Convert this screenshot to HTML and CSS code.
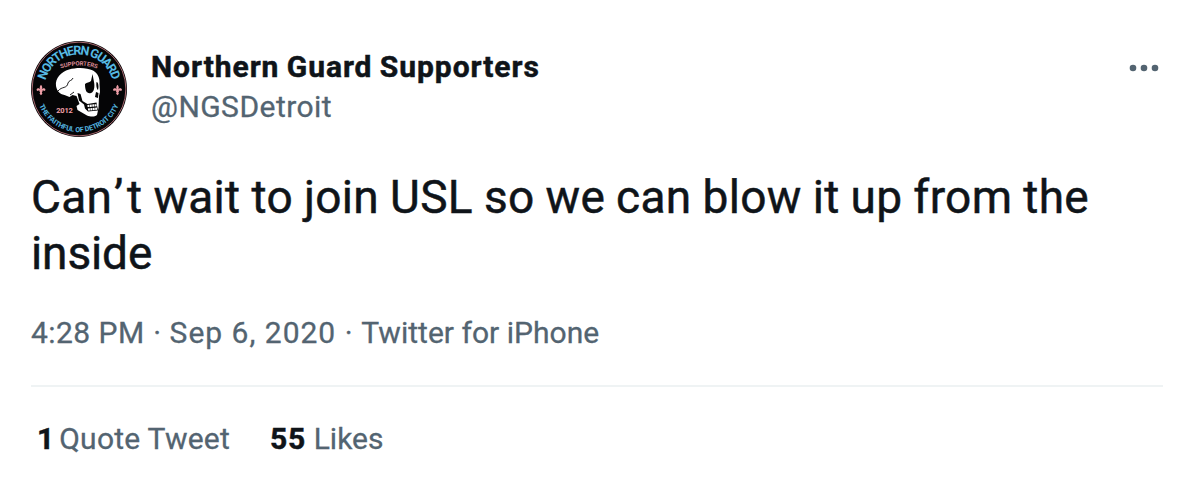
FILE: index.html
```
<!DOCTYPE html>
<html lang="en">
<head>
	<meta charset="UTF-8">
	<title>Northern Guard Supporters</title>
	<link rel="stylesheet" href="styles.css">
</head>
<body>
<div class="tweet">
	<div class="head">
		<svg class="avatar" viewBox="0 0 96 96">
			<defs>
				<path id="arcTop" d="M13.500 48a34.500 34.500 0 0 1 69 0"/>
				<path id="arcSub" d="M27 28.500Q48 20.500 69 28.500"/>
				<path id="arcBottom" d="M5 48a43 43 0 0 0 86 0"/>
				<path id="lily" d="M0-5.2c-1.5 1.8-1.6 3-.7 4.8-1-1.8-3.6-1.8-3.7.2 0 1 1 1.5 1.7.8l1.6.2-.5.9.8.5-.6 1.6L0 5.2l1.4-1.4-.6-1.6.8-.5-.5-.9 1.6-.2c.7.7 1.7.2 1.7-.8-.1-2-2.7-2-3.7-.2.9-1.8.8-3-.7-4.8z"/>
			</defs>
			<circle cx="48" cy="48" r="48" fill="#050506"/>
			<circle cx="48" cy="48" r="46.900" fill="none" stroke="#a8686f" stroke-width="1"/>
			<text class="arc-name"><textPath href="#arcTop" startOffset="50%" textLength="91">NORTHERN GUARD</textPath></text>
			<text class="arc-sub"><textPath href="#arcSub" startOffset="50%" textLength="37">SUPPORTERS</textPath></text>
			<text class="arc-motto"><textPath href="#arcBottom" startOffset="50%" textLength="101">THE FAITHFUL OF DETROIT CITY</textPath></text>
			<!-- skull -->
			<path fill="#fff" d="M25 45c-1-8 5-14 13-16.500 8-2.300 18-2 24 1 5 3 7 7.500 6.500 13.500l.5 8-1 4-.5 12-1.500 7c-3 2.500-7 1.500-10 .5l-9.500-5.500-1-4 3-2-3-8-4-1-3 2-5-2c-5-1-7.500-4-8.500-9z"/>
			<!-- eye, nose, cheek, teeth -->
			<path fill="#050506" d="M54 43c2-2 4-1 6-3l1.500-7 1.500 8c1 5 0 10-3 11-4 1-6-2-6-9zM65.500 41c2 0 2.500 5 1.500 8-1.500-1-2-5-1.500-8zM65 51l2.500 1-.5 5-3-1zM46.500 52l3 1 2 7 5 3 9-1.500 1.500 8-10 1-3-3-1-4-5-4z"/>
			<path fill="none" stroke="#050506" stroke-width=".9" d="M27 50c4-5 9-2 10-8 1-3 4-2 5-5M39 54l4-3"/>
			<path fill="none" stroke="#fff" stroke-width="2.200" stroke-dasharray="1.900 .5" d="M56.500 65l10-.8M57 68.500l9-.8"/>
			<text class="year" x="25.300" y="71.500" textLength="16.500">2012</text>
			<use href="#lily" x="10" y="49" fill="#f0a0a8"/>
			<use href="#lily" x="86.500" y="49" fill="#f0a0a8"/>
		</svg>
		<div class="user">
			<div class="name">Northern Guard Supporters</div>
			<div class="handle">@NGSDetroit</div>
		</div>
		<svg class="more" viewBox="0 0 30 8">
			<circle cx="4" cy="4" r="3.300"/>
			<circle cx="15" cy="4" r="3.300"/>
			<circle cx="26" cy="4" r="3.300"/>
		</svg>
	</div>
	<p class="text">Ca<span class="loose">n’</span>t wait to join USL so we can blow it up from the <span class="last">inside</span></p>
	<div class="meta"><span class="time">4:28 PM</span><i>·</i><span class="date">Sep 6, 2020</span><i>·</i><span class="source">Twitter for iPhone</span></div>
	<div class="stats">
		<div class="quotes"><b>1</b><span>Quote Tweet</span></div>
		<div class="likes"><b>55</b><span>Likes</span></div>
	</div>
</div>
</body>
</html>
```

FILE: styles.css
```
body,p{
	margin: 0;
}
body{
	background-color: #fff;
	color: #0f1419;
	font-family: Roboto, "Liberation Sans", sans-serif;
	font-size: 30px;
}
.tweet{
	padding: 41px 26px 0 31px;
}
.head{
	display: flex;
	height: 96px;
}
.avatar{
	width: 96px;
	height: 96px;
	margin-right: 24px;
}
.avatar text{
	font-family: Roboto, sans-serif;
	font-weight: bold;
	text-anchor: middle;
}
.arc-name{
	font-size: 12.5px;
	fill: #55b9e3;
}
.avatar .arc-sub{
	font-size: 6px;
	fill: #d98a94;
}
.arc-motto{
	font-size: 7px;
	fill: #55b9e3;
}
.avatar .year{
	font-size: 7.5px;
	fill: #f0a0a8;
	text-anchor: start;
}
.user{
	flex: 1;
	padding-top: 6px;
	line-height: 40px;
	white-space: nowrap;
}
.name{
	font-weight: bold;
	letter-spacing: 0.95px;
	word-spacing: -1px;
	-webkit-text-stroke: 0.5px #0f1419;
}
.handle{
	color: #536471;
	letter-spacing: 0.45px;
}
.more{
	width: 30px;
	height: 8px;
	margin: 23px 4px 0 0;
	fill: #536471;
}
.text{
	margin-top: 32px;
	font-size: 46px;
	line-height: 56px;
	letter-spacing: 0.31px;
	word-spacing: -0.7px;
	-webkit-text-stroke: 0.5px #0f1419;
}
.loose{
	letter-spacing: 3.8px;
}
.last{
	letter-spacing: -0.1px;
}
.meta{
	display: flex;
	margin-top: 32px;
	padding-bottom: 32px;
	line-height: 40px;
	color: #536471;
	border-bottom: 2px solid #eff3f4;
}
.meta i{
	width: 25px;
	text-align: center;
	font-style: normal;
}
.time{
	letter-spacing: 0.45px;
}
.date{
	letter-spacing: 1px;
}
.source{
	letter-spacing: 0.03px;
}
.meta,
.handle,
.stats span{
	-webkit-text-stroke: 0.3px #536471;
}
.stats{
	display: flex;
	gap: 40px;
	padding: 32px 0 0 6px;
	line-height: 40px;
}
.stats b{
	-webkit-text-stroke: 0.5px #0f1419;
}
.quotes b{
	margin-right: 5px;
}
.quotes span{
	letter-spacing: 0.25px;
}
.likes b{
	margin-right: 8px;
	letter-spacing: 0.6px;
}
.stats span{
	color: #536471;
}
```
